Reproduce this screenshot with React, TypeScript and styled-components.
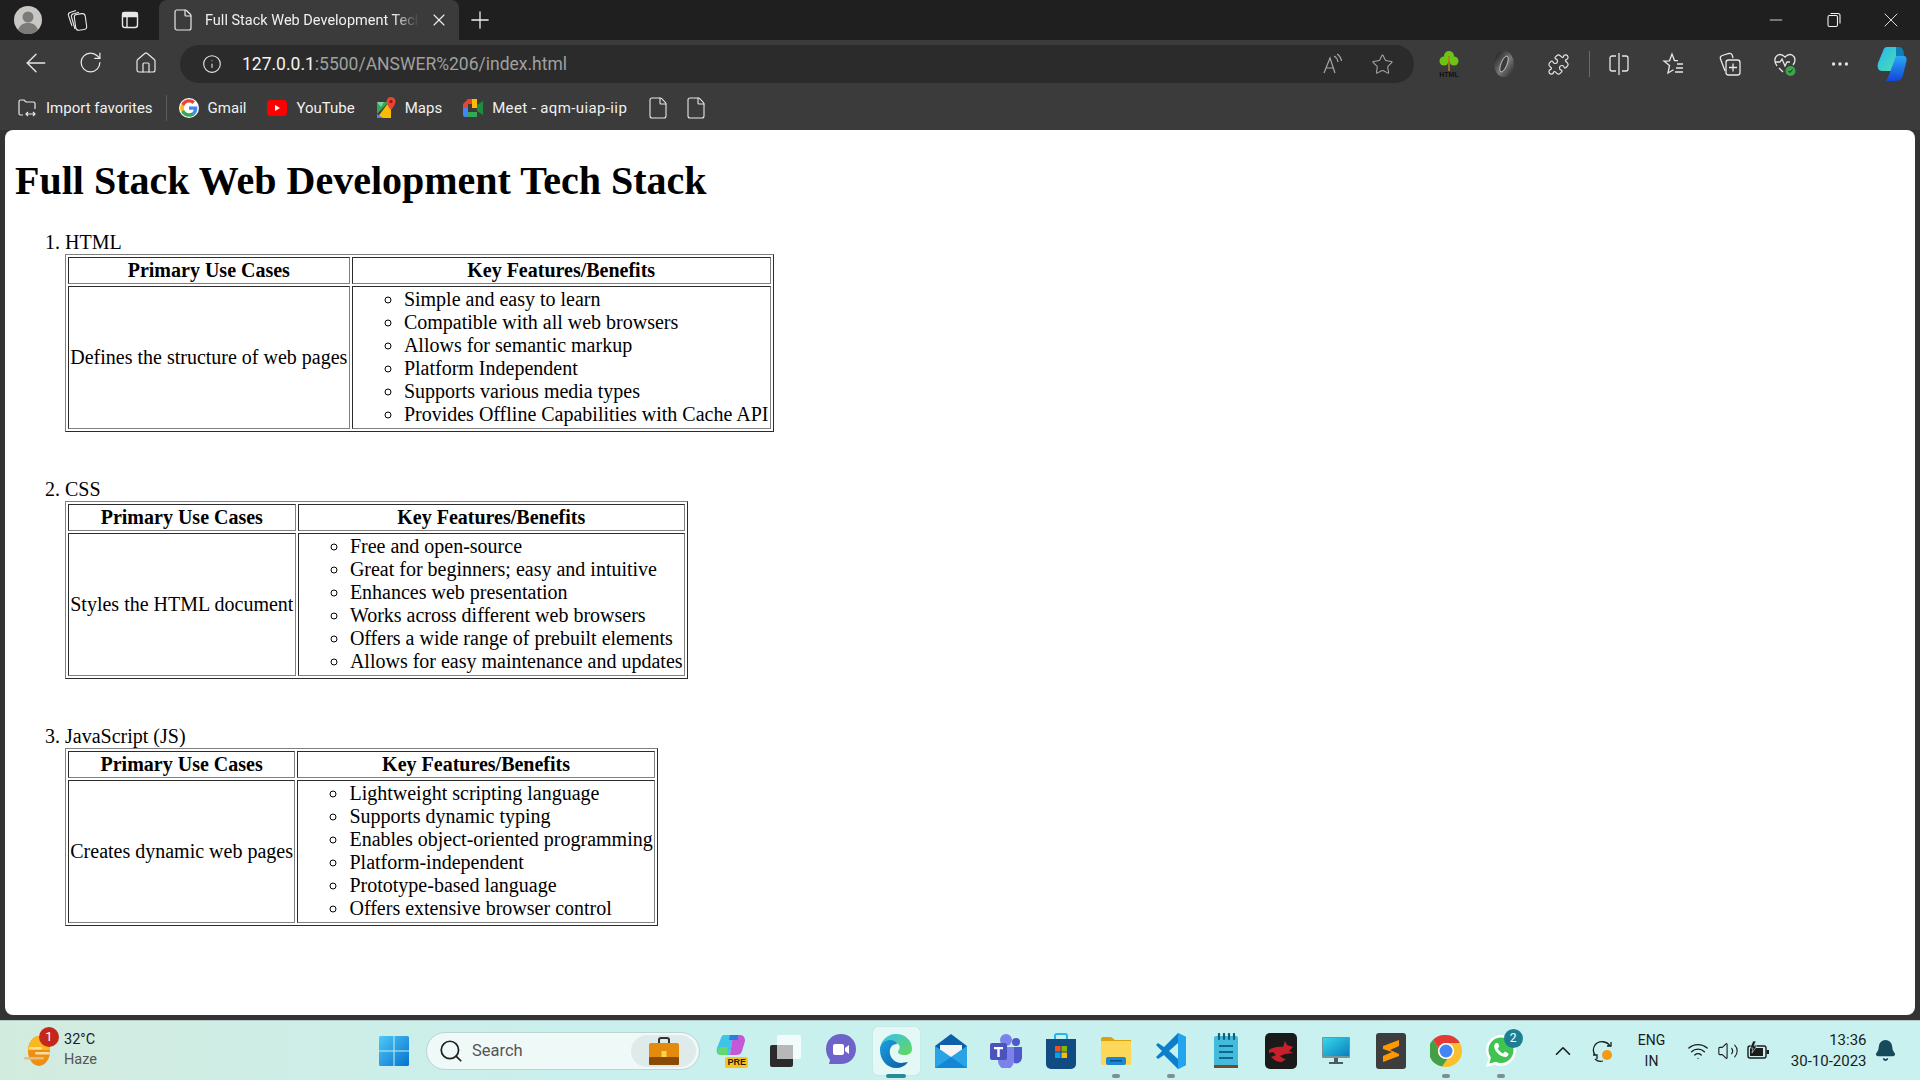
import React from 'react'
import styled, { createGlobalStyle } from 'styled-components'
import {
	ArrowLeft,
	RotateCw,
	Home,
	Info,
	Star,
	Puzzle,
	X,
	Minus,
	Plus,
	File,
	MoreHorizontal,
	Search,
	ChevronUp,
	Wifi,
	Volume2,
	Bell,
} from 'lucide-react'

const stacks = [
	{
		name: 'HTML',
		useCase: 'Defines the structure of web pages',
		features: [
			'Simple and easy to learn',
			'Compatible with all web browsers',
			'Allows for semantic markup',
			'Platform Independent',
			'Supports various media types',
			'Provides Offline Capabilities with Cache API',
		],
	},
	{
		name: 'CSS',
		useCase: 'Styles the HTML document',
		features: [
			'Free and open-source',
			'Great for beginners; easy and intuitive',
			'Enhances web presentation',
			'Works across different web browsers',
			'Offers a wide range of prebuilt elements',
			'Allows for easy maintenance and updates',
		],
	},
	{
		name: 'JavaScript (JS)',
		useCase: 'Creates dynamic web pages',
		features: [
			'Lightweight scripting language',
			'Supports dynamic typing',
			'Enables object-oriented programming',
			'Platform-independent',
			'Prototype-based language',
			'Offers extensive browser control',
		],
	},
]

export default function App() {
	return (
		<Screen>
			<GlobalStyle />
			<TabStrip>
				<Slot $w={40}>
					<AvatarIcon />
				</Slot>
				<Slot $w={48}>
					<WorkspacesIcon />
				</Slot>
				<Slot $w={48}>
					<VerticalTabsIcon />
				</Slot>
				<ActiveTab>
					<File size={24} strokeWidth={1.2} color="#e8e8e8" />
					<TabTitle>Full Stack Web Development Tech Stack</TabTitle>
					<X size={20} strokeWidth={1.3} color="#f0f0f0" />
				</ActiveTab>
				<Slot $w={42}>
					<Plus size={28} strokeWidth={1.1} color="#f0f0f0" />
				</Slot>
				<Grow />
				<Slot $w={57.5}>
					<Minus size={20} strokeWidth={1} color="#f0f0f0" />
				</Slot>
				<Slot $w={57.5}>
					<RestoreIcon />
				</Slot>
				<Slot $w={57.5}>
					<X size={24} strokeWidth={0.9} color="#f0f0f0" />
				</Slot>
			</TabStrip>

			<Toolbar>
				<Slot $w={55}>
					<ArrowLeft size={30} strokeWidth={1.1} color="#e8e8e8" />
				</Slot>
				<Slot $w={55}>
					<RotateCw size={25} strokeWidth={1.2} color="#e8e8e8" />
				</Slot>
				<Slot $w={55}>
					<Home size={24} strokeWidth={1.2} color="#e8e8e8" />
				</Slot>
				<AddressPill>
					<Info size={20} strokeWidth={1.3} color="#e8e8e8" />
					<UrlText>
						127.0.0.1<UrlRest>:5500/ANSWER%206/index.html</UrlRest>
					</UrlText>
					<Grow />
					<Slot $w={50}>
						<ReadAloudIcon />
					</Slot>
					<Slot $w={48}>
						<Star size={23} strokeWidth={1.1} color="#a6a6a6" />
					</Slot>
				</AddressPill>
				<ExtensionGroup>
					<Slot $w={55}>
						<TreeIcon />
					</Slot>
					<Slot $w={55}>
						<RingIcon />
					</Slot>
					<Slot $w={55}>
						<Puzzle size={23} strokeWidth={1.2} color="#e8e8e8" />
					</Slot>
					<ToolbarDivider />
					<Slot $w={55.5}>
						<SplitIcon />
					</Slot>
					<Slot $w={55.5}>
						<FavoritesIcon />
					</Slot>
					<Slot $w={55.5}>
						<CollectionsIcon />
					</Slot>
					<Slot $w={55.5}>
						<HealthIcon />
					</Slot>
					<Slot $w={53}>
						<MoreHorizontal size={22} strokeWidth={1.6} color="#e8e8e8" />
					</Slot>
					<Slot $w={52}>
						<CopilotIcon />
					</Slot>
				</ExtensionGroup>
			</Toolbar>

			<BookmarksBar>
				<Bookmark>
					<ImportIcon />
					<span>Import favorites</span>
				</Bookmark>
				<BookmarkDivider />
				<Bookmark>
					<GoogleIcon />
					<span>Gmail</span>
				</Bookmark>
				<Bookmark>
					<YoutubeIcon />
					<span>YouTube</span>
				</Bookmark>
				<Bookmark>
					<MapsIcon />
					<span>Maps</span>
				</Bookmark>
				<Bookmark>
					<MeetIcon />
					<MeetLabel>Meet - aqm-uiap-iip</MeetLabel>
				</Bookmark>
				<BookmarkFile>
					<File size={24} strokeWidth={1.1} color="#e8e8e8" />
				</BookmarkFile>
				<BookmarkFile>
					<File size={24} strokeWidth={1.1} color="#e8e8e8" />
				</BookmarkFile>
			</BookmarksBar>

			<Viewport>
				<Content>
					<ScaledDocument>
						<Heading>Full Stack Web Development Tech Stack</Heading>
						<StackList>
							{stacks.map((stack) => (
								<li key={stack.name}>
									{stack.name}
									<StackTable>
										<thead>
											<tr>
												<HeadCell>Primary Use Cases</HeadCell>
												<HeadCell>Key Features/Benefits</HeadCell>
											</tr>
										</thead>
										<tbody>
											<tr>
												<BodyCell>{stack.useCase}</BodyCell>
												<BodyCell>
													<FeatureList>
														{stack.features.map((feature) => (
															<li key={feature}>{feature}</li>
														))}
													</FeatureList>
												</BodyCell>
											</tr>
										</tbody>
									</StackTable>
									<br />
									<br />
								</li>
							))}
						</StackList>
					</ScaledDocument>
				</Content>
			</Viewport>

			<Taskbar>
				<Weather>
					<WeatherIconWrap>
						<HazeIcon />
						<WeatherBadge>1</WeatherBadge>
					</WeatherIconWrap>
					<WeatherText>
						<Temp>32°C</Temp>
						<Haze>Haze</Haze>
					</WeatherText>
				</Weather>
				<Slot $w={55}>
					<WindowsIcon />
				</Slot>
				<SearchBox>
					<Search size={26} strokeWidth={1.6} color="#1f1f1f" />
					<SearchLabel>Search</SearchLabel>
					<Grow />
					<SearchBadge>
						<BriefcaseIcon />
					</SearchBadge>
				</SearchBox>
				<TaskSlot>
					<CopilotPreIcon />
				</TaskSlot>
				<TaskSlot>
					<TaskViewIcon />
				</TaskSlot>
				<TaskSlot>
					<MeetChatIcon />
				</TaskSlot>
				<TaskSlot $active>
					<EdgeIcon />
					<RunningDot $active />
				</TaskSlot>
				<TaskSlot>
					<MailIcon />
				</TaskSlot>
				<TaskSlot>
					<TeamsIcon />
				</TaskSlot>
				<TaskSlot>
					<StoreIcon />
				</TaskSlot>
				<TaskSlot>
					<FolderIcon />
					<RunningDot />
				</TaskSlot>
				<TaskSlot>
					<VsCodeIcon />
					<RunningDot />
				</TaskSlot>
				<TaskSlot>
					<NotepadIcon />
				</TaskSlot>
				<TaskSlot>
					<MsiIcon />
				</TaskSlot>
				<TaskSlot>
					<MonitorIcon />
				</TaskSlot>
				<TaskSlot>
					<SublimeIcon />
				</TaskSlot>
				<TaskSlot>
					<ChromeIcon />
					<RunningDot />
				</TaskSlot>
				<TaskSlot>
					<WhatsappIcon />
					<AppBadge>2</AppBadge>
					<RunningDot />
				</TaskSlot>
				<Tray>
					<Slot $w={38}>
						<ChevronUp size={26} strokeWidth={1.5} color="#1c1c1c" />
					</Slot>
					<Slot $w={42}>
						<SyncIcon />
					</Slot>
					<Lang>
						<span>ENG</span>
						<span>IN</span>
					</Lang>
					<Slot $w={30}>
						<Wifi size={22} strokeWidth={1.4} color="#1c1c1c" />
					</Slot>
					<Slot $w={30}>
						<Volume2 size={22} strokeWidth={1.2} color="#1c1c1c" />
					</Slot>
					<Slot $w={30}>
						<BatteryIcon />
					</Slot>
					<Clock>
						<span>13:36</span>
						<span>30-10-2023</span>
					</Clock>
					<Slot $w={38}>
						<Bell size={23} fill="#164a5c" color="#164a5c" />
					</Slot>
				</Tray>
			</Taskbar>
		</Screen>
	)
}

/* small drawn icons */

const AvatarIcon = () => (
	<svg width="28" height="28" viewBox="0 0 28 28">
		<circle cx="14" cy="14" r="14" fill="#c9c7c4" />
		<circle cx="14" cy="11" r="5.5" fill="#7d7b79" />
		<path d="M4 24c2-6 6-7 10-7s8 1 10 7a14 14 0 0 1-20 0z" fill="#7d7b79" />
	</svg>
)

const WorkspacesIcon = () => (
	<svg width="24" height="24" viewBox="0 0 24 24" fill="none" stroke="#e8e8e8" strokeWidth="1.1">
		<rect x="10" y="6" width="11" height="16" rx="3" transform="rotate(-8 15 14)" />
		<path d="M10 21 6.500 9c-.4-1.500.2-2.500 1.500-3l6-1.800" />
		<path d="M7 18 3.500 7.500c-.4-1.500.2-2.500 1.500-3l6-2" />
	</svg>
)

const VerticalTabsIcon = () => (
	<svg width="20" height="20" viewBox="0 0 20 20" fill="none" stroke="#e8e8e8" strokeWidth="1.4">
		<rect x="2.5" y="2.5" width="15" height="15" rx="2.5" />
		<path d="M7 6.500v11" />
		<path d="M3 3h14v3.500H3z" fill="#e8e8e8" />
	</svg>
)

const RestoreIcon = () => (
	<svg width="16" height="16" viewBox="0 0 16 16" fill="none" stroke="#f0f0f0" strokeWidth="1.1">
		<rect x="2" y="3.5" width="9.5" height="11" rx="1.5" />
		<path d="M4.500 1.500h7.500a2 2 0 0 1 2 2v8" />
	</svg>
)

const ReadAloudIcon = () => (
	<svg width="22" height="22" viewBox="0 0 22 22" fill="none" stroke="#a6a6a6" strokeWidth="1.2">
		<path d="M2 20 8 5l5 15M4 15h8" />
		<path d="M12 3c2 1 3.500 3 4 6M15 1c2.500 1.500 4 4 4.500 7" />
	</svg>
)

const TreeIcon = () => (
	<svg width="24" height="28" viewBox="0 0 24 28">
		<circle cx="12" cy="6" r="5" fill="#6cc413" />
		<circle cx="7" cy="11" r="4.500" fill="#6cc413" />
		<circle cx="17" cy="11" r="4.500" fill="#6cc413" />
		<rect x="11.200" y="6" width="1.600" height="15" fill="#b7791f" />
		<text x="12" y="27" textAnchor="middle" fontSize="7" fontWeight="bold" fontFamily="'Liberation Sans', sans-serif" fill="#111">
			HTML
		</text>
	</svg>
)

const RingIcon = () => (
	<svg width="22" height="28" viewBox="0 0 22 28">
		<defs>
			<linearGradient id="ringGrad" x1="0" y1="0" x2="1" y2="1">
				<stop offset="0" stopColor="#111" />
				<stop offset="0.55" stopColor="#777" />
				<stop offset="1" stopColor="#222" />
			</linearGradient>
		</defs>
		<ellipse cx="11" cy="14" rx="10" ry="13" fill="url(#ringGrad)" />
		<ellipse cx="11" cy="14" rx="3" ry="8.500" fill="#3b3b3b" stroke="#ccc" strokeWidth="0.800" transform="rotate(22 11 14)" />
	</svg>
)

const SplitIcon = () => (
	<svg width="22" height="24" viewBox="0 0 22 24" fill="none" stroke="#e8e8e8" strokeWidth="1.3">
		<path d="M8 4H4a2 2 0 0 0-2 2v11a2 2 0 0 0 2 2h4M14 4h4a2 2 0 0 1 2 2v11a2 2 0 0 1-2 2h-4M11 1v22" />
	</svg>
)

const FavoritesIcon = () => (
	<svg width="24" height="24" viewBox="0 0 24 24" fill="none" stroke="#e8e8e8" strokeWidth="1.3">
		<path d="M16 8.700 12.500 8.500 10 2 7.500 8.800 2 9l5.500 4.500L6 21l5.500-3.300" />
		<path d="M15 12h6M14 16h7M13 20h8" />
	</svg>
)

const CollectionsIcon = () => (
	<svg width="24" height="26" viewBox="0 0 24 26" fill="none" stroke="#e8e8e8" strokeWidth="1.3">
		<path d="M7 20 2.500 8c-.5-1.500.2-3 1.700-3.500L11 2.500c1.500-.4 2.600.2 3.200 1.500L15 7" />
		<rect x="8" y="9" width="14" height="15" rx="2.500" />
		<path d="M15 12.500v8M11 16.500h8" />
	</svg>
)

const HealthIcon = () => (
	<svg width="24" height="26" viewBox="0 0 24 26" fill="none">
		<path
			d="M4 15C1 11 1 6 5 4c3-1.500 5 0 7 2 2-2 4-3.500 7-2 4 2 3.500 7 1 10M1.500 11H7l2-3 3 7 2-4h3M6 17l4 4"
			stroke="#e8e8e8"
			strokeWidth="1.3"
		/>
		<circle cx="17.500" cy="20" r="5" fill="#3fa34d" />
		<path d="M15.500 20l1.500 1.500 2.500-3" stroke="#123" strokeWidth="1" />
	</svg>
)

const CopilotIcon = () => (
	<svg width="30" height="36" viewBox="0 0 30 36">
		<defs>
			<linearGradient id="copA" x1="0" y1="0" x2="1" y2="1">
				<stop offset="0" stopColor="#27b7f0" />
				<stop offset="1" stopColor="#4fe0b0" />
			</linearGradient>
			<linearGradient id="copB" x1="0" y1="0" x2="0" y2="1">
				<stop offset="0" stopColor="#27a8f5" />
				<stop offset="1" stopColor="#1546d8" />
			</linearGradient>
		</defs>
		<path d="M10 1h12l-1 6-7 18H5C1 25 0 21 1 17L6 5c1-3 2-4 4-4z" fill="url(#copA)" />
		<path d="M16 35H9l3-6 7-19h8c2 0 3 2 2.500 5L26 29c-1 4-3 6-10 6z" fill="url(#copB)" />
		<path d="M19 1h3c3 0 5 3 5 9h-8z" fill="#0d7fb5" />
	</svg>
)

const ImportIcon = () => (
	<svg width="20" height="20" viewBox="0 0 20 20" fill="none" stroke="#e8e8e8" strokeWidth="1.2">
		<path d="M6 17H3.500A1.500 1.500 0 0 1 2 15.500V3.500A1.500 1.500 0 0 1 3.500 2H7l2 2h7.500A1.500 1.500 0 0 1 18 5.500V11" />
		<path d="M9 16h9M11 14l-2 2 2 2M16 14l2 2-2 2" />
	</svg>
)

const GoogleIcon = () => (
	<svg width="20" height="20" viewBox="0 0 48 48">
		<circle cx="24" cy="24" r="24" fill="#fff" />
		<path fill="#EA4335" d="M24 11c3.300 0 6 1.200 8.200 3.100l6-6C34.500 4.700 29.600 3 24 3 15.800 3 8.800 7.700 5.300 14.500l7 5.400C14 14.700 18.500 11 24 11z" />
		<path fill="#4285F4" d="M44 24.500c0-1.500-.1-2.900-.4-4.300H24v8.100h11.300c-.5 2.600-2 4.900-4.300 6.400l6.700 5.200C41.600 36.300 44 30.900 44 24.500z" />
		<path fill="#FBBC05" d="M12.300 28.100c-.4-1.300-.7-2.700-.7-4.100s.3-2.800.7-4.100l-7-5.400C3.900 17.400 3 20.600 3 24s.9 6.600 2.300 9.500l7-5.400z" />
		<path fill="#34A853" d="M24 45c5.600 0 10.400-1.900 13.700-5.100L31 34.700c-1.800 1.200-4.200 2-7 2-5.500 0-10-3.700-11.700-8.600l-7 5.400C8.800 40.300 15.800 45 24 45z" />
	</svg>
)

const YoutubeIcon = () => (
	<svg width="20" height="16" viewBox="0 0 20 16">
		<rect width="20" height="16" rx="4" fill="#f00" />
		<path d="M8 5l5 3-5 3z" fill="#fff" />
	</svg>
)

const MapsIcon = () => (
	<svg width="20" height="22" viewBox="0 0 20 22">
		<path d="M1 5h12L1 17z" fill="#34a853" />
		<path d="M1 21 13 5h2v16z" fill="#fbbc05" />
		<path d="M1 17v4h6z" fill="#4285f4" />
		<path d="M5 10 1 5h7z" fill="#7dd3a8" />
		<path d="M15 0a4.500 4.500 0 0 0-4.500 4.500C10.500 8 15 13 15 13s4.500-5 4.500-8.500A4.500 4.500 0 0 0 15 0z" fill="#ea4335" />
		<circle cx="15" cy="4.500" r="1.600" fill="#8c1c13" />
	</svg>
)

const MeetIcon = () => (
	<svg width="20" height="18" viewBox="0 0 20 18">
		<path d="M5 0h9v5H5v4H0V5z" fill="#ea4335" />
		<path d="M0 9h5v9H2a2 2 0 0 1-2-2z" fill="#4285f4" />
		<path d="M5 13h9v5H5z" fill="#34a853" />
		<rect x="9" y="0" width="5" height="9" fill="#fbbc05" />
		<path d="M14 6l6-4v14l-6-4z" fill="#1e8e3e" />
	</svg>
)

const HazeIcon = () => (
	<svg width="28" height="30" viewBox="0 0 28 30">
		<ellipse cx="15" cy="15" rx="11" ry="15" fill="#ef8f10" />
		<path d="M15 0c6 0 11 7 11 14H4C4 7 9 0 15 0z" fill="#f9b81f" />
		<rect x="5" y="11" width="13" height="2.500" rx="1.200" fill="#f8dca0" />
		<rect x="11" y="16" width="15" height="2.500" rx="1.200" fill="#f8dca0" />
		<rect x="0" y="21" width="20" height="2.500" rx="1.200" fill="#dcc08a" />
	</svg>
)

const WindowsIcon = () => (
	<svg width="30" height="30" viewBox="0 0 30 30">
		<defs>
			<linearGradient id="winGrad" x1="0" y1="0" x2="1" y2="1">
				<stop offset="0" stopColor="#4fc8f8" />
				<stop offset="1" stopColor="#0572cf" />
			</linearGradient>
		</defs>
		<path d="M0 1.500A1.500 1.500 0 0 1 1.500 0h13v14.500H0zM15.500 0h13A1.500 1.500 0 0 1 30 1.500v13H15.500zM0 15.500h14.500V30h-13A1.500 1.500 0 0 1 0 28.500zM15.500 15.500H30v13a1.500 1.500 0 0 1-1.500 1.500h-13z" fill="url(#winGrad)" />
	</svg>
)

const BriefcaseIcon = () => (
	<svg width="30" height="28" viewBox="0 0 30 28">
		<path d="M10 7V3a2 2 0 0 1 2-2h6a2 2 0 0 1 2 2v4" fill="none" stroke="#333" strokeWidth="2" />
		<rect y="6" width="30" height="22" rx="2" fill="#e48a0c" />
		<rect y="20" width="30" height="8" rx="1" fill="#8a4a08" />
		<rect x="12.500" y="14" width="5" height="6" fill="#f8d84a" />
	</svg>
)

const CopilotPreIcon = () => (
	<PreWrap>
		<svg width="30" height="26" viewBox="0 0 30 26">
			<path d="M8 1h9l-3 20H5C1 21 0 18 1 14L5 4c.7-2 1.500-3 3-3z" fill="#3fc4e8" />
			<path d="M14 21l3-20h7c3 0 5 2 5 6l-3 10c-1 3-3 4-6 4z" fill="#c458d6" />
			<path d="M14 1h8v5h-9z" fill="#2b7de0" />
			<path d="M4 13h8l-1 8H5c-3 0-4-3-3-6z" fill="#63d86e" />
		</svg>
		<PreTag>PRE</PreTag>
	</PreWrap>
)

const TaskViewIcon = () => (
	<svg width="32" height="32" viewBox="0 0 32 32">
		<rect x="0" y="10" width="23" height="22" rx="2" fill="#2b2b2b" />
		<rect x="7" y="0" width="24" height="24" rx="2" fill="#fff" fillOpacity="0.75" />
		<rect x="7" y="10" width="16" height="14" fill="#b8b8b8" />
	</svg>
)

const MeetChatIcon = () => (
	<svg width="30" height="34" viewBox="0 0 30 34">
		<path d="M15 0c8 0 15 6 15 15s-7 15-15 15H3l1-4C1.500 23 0 19 0 15 0 6 7 0 15 0z" fill="#6e63c9" />
		<rect x="7" y="10" width="11" height="11" rx="2" fill="#fff" />
		<path d="M19 14l4-3v9l-4-3z" fill="#fff" />
	</svg>
)

const EdgeIcon = () => (
	<svg width="32" height="36" viewBox="0 0 32 36">
		<defs>
			<linearGradient id="edgeBlue" x1="0" y1="0" x2="1" y2="1">
				<stop offset="0" stopColor="#1ba0e0" />
				<stop offset="1" stopColor="#0c59a4" />
			</linearGradient>
			<linearGradient id="edgeGreen" x1="0" y1="0" x2="1" y2="1">
				<stop offset="0" stopColor="#35c1f1" />
				<stop offset="1" stopColor="#66d856" />
			</linearGradient>
		</defs>
		<path d="M16 1c9 0 16 6 16 15 0 4-3 6-8 6-3 0-6-1-6-3s3-3 1-7c-2-3-7-4-11-2C3 12 0 16 0 17 0 8 7 1 16 1z" fill="url(#edgeGreen)" />
		<path d="M0 17c0-6 5-10 10-10 3 0 7 2 7 4-5 0-8 4-7 10 1 5 6 9 11 9l7-1c-3 4-7 6-12 6C7 35 0 27 0 17z" fill="url(#edgeBlue)" />
	</svg>
)

const MailIcon = () => (
	<svg width="32" height="34" viewBox="0 0 32 34">
		<path d="M0 12 16 0l16 12v6H0z" fill="#0f5fa8" />
		<path d="M5 11h22v5l-11 7-11-7z" fill="#f4f4f4" />
		<path d="M0 12l16 11 16-11v22H0z" fill="#2aa3e6" />
		<path d="M0 34l16-11 16 11z" fill="#1287d6" />
	</svg>
)

const TeamsIcon = () => (
	<svg width="32" height="34" viewBox="0 0 32 34">
		<circle cx="16" cy="6" r="6" fill="#7b83eb" />
		<circle cx="26" cy="8" r="4" fill="#5059c9" />
		<path d="M20 13h12v11a6 6 0 0 1-8 5z" fill="#5059c9" />
		<path d="M8 13h16v14a7 7 0 0 1-16 0z" fill="#7b83eb" />
		<rect y="9" width="17" height="17" rx="2" fill="#4b53bc" />
		<path d="M4 13h9v2.200H9.700V23H7.300v-7.800H4z" fill="#fff" />
	</svg>
)

const StoreIcon = () => (
	<svg width="30" height="36" viewBox="0 0 30 36">
		<path d="M9 7V3a2 2 0 0 1 2-2h8a2 2 0 0 1 2 2v4" fill="none" stroke="#26b5f0" strokeWidth="2" />
		<path d="M0 6h30v25a5 5 0 0 1-5 5H5a5 5 0 0 1-5-5z" fill="#124a82" />
		<rect x="9" y="13" width="5.500" height="5.500" fill="#f25022" />
		<rect x="15.500" y="13" width="5.500" height="5.500" fill="#7fba00" />
		<rect x="9" y="19.500" width="5.500" height="5.500" fill="#00a4ef" />
		<rect x="15.500" y="19.500" width="5.500" height="5.500" fill="#ffb900" />
	</svg>
)

const FolderIcon = () => (
	<svg width="30" height="28" viewBox="0 0 30 28">
		<path d="M0 2a2 2 0 0 1 2-2h8l4 3h16v6H0z" fill="#d9a20e" />
		<rect y="4" width="30" height="24" rx="1" fill="#fbd85a" />
		<rect x="5" y="20" width="20" height="8" rx="2" fill="#1a87d6" />
		<rect x="9" y="23" width="12" height="1.500" fill="#0b4f88" />
	</svg>
)

const VsCodeIcon = () => (
	<svg width="30" height="36" viewBox="0 0 30 36">
		<path d="M22 0l8 4v28l-8 4-14-14-6 4-2-2 6-6-6-6 2-2 6 4z" fill="#0b7fc9" />
		<path d="M22 0l8 4v28l-8 4z" fill="#22a5ee" />
		<path d="M22 10v16l-9-8z" fill="#c8f0ef" />
	</svg>
)

const NotepadIcon = () => (
	<svg width="24" height="36" viewBox="0 0 24 36">
		<rect y="3" width="24" height="31" rx="2" fill="#43bbdc" />
		<rect y="32" width="24" height="3" fill="#7a4a20" />
		<path d="M5 1v5M10 1v5M15 1v5M20 1v5" stroke="#0f5f82" strokeWidth="2.200" strokeLinecap="round" />
		<path d="M5 13h14M5 19h14M5 25h14" stroke="#11668c" strokeWidth="2" />
	</svg>
)

const MsiIcon = () => (
	<svg width="32" height="36" viewBox="0 0 32 36">
		<rect width="32" height="36" rx="5" fill="#1a1a1a" />
		<path d="M4 17c4-3 9-4 14-3l2-6 2 4 6 2-4 4 4 2-8 1-5 2c2 2 4 3 6 3l-4 3c-5 0-8-2-11-5l5-2-3-3-4 1z" fill="#c8202a" />
	</svg>
)

const MonitorIcon = () => (
	<svg width="28" height="28" viewBox="0 0 28 28">
		<defs>
			<linearGradient id="monGrad" x1="0" y1="0" x2="1" y2="1">
				<stop offset="0" stopColor="#35d8ec" />
				<stop offset="1" stopColor="#0a7fbe" />
			</linearGradient>
		</defs>
		<rect width="28" height="21" rx="1" fill="#7a9298" />
		<rect x="1" y="1" width="26" height="18" fill="url(#monGrad)" />
		<rect x="12" y="21" width="4" height="4" fill="#4d5a5e" />
		<rect x="7" y="25" width="14" height="2" fill="#4d5a5e" />
	</svg>
)

const SublimeIcon = () => (
	<svg width="30" height="36" viewBox="0 0 30 36">
		<rect width="30" height="36" rx="3" fill="#3d3d3d" />
		<path d="M7 13 23 7v6l-9 4 9 4v2L7 29v-6l9-4-9-3z" fill="#ff9800" />
	</svg>
)

const ChromeIcon = () => (
	<svg width="32" height="34" viewBox="0 0 32 32">
		<circle cx="16" cy="16" r="16" fill="#fbc02d" />
		<path d="M16 0a16 16 0 0 1 13.900 8H16a8 8 0 0 0-7.500 5L3 4.800A16 16 0 0 1 16 0z" fill="#e53935" />
		<path d="M3 4.800 8.500 13a8 8 0 0 0 9 10.800L12 31.500A16 16 0 0 1 3 4.800z" fill="#43a047" />
		<circle cx="16" cy="16" r="8" fill="#fff" />
		<circle cx="16" cy="16" r="6.500" fill="#4285f4" />
	</svg>
)

const WhatsappIcon = () => (
	<svg width="32" height="34" viewBox="0 0 32 34">
		<path d="M16 1C8 1 1 8 1 16c0 3 1 6 2.500 8L1 33l9-2.500c2 1 4 1.500 6 1.500 8 0 15-7 15-16S24 1 16 1z" fill="#fff" />
		<path d="M16 3.500C9 3.500 3.500 9 3.500 16c0 2.800.9 5.300 2.400 7.400L4.500 29.500l6.300-1.700c1.600.8 3.300 1.200 5.200 1.200 7 0 12.500-6 12.500-13S23 3.500 16 3.500z" fill="#3fc351" />
		<path d="M11 9c-1 .5-2 2-1.800 4 .5 4 5.500 9.500 10.500 10 2 .2 3.300-1 3.800-2.300l-.2-1.500-3.500-1.700-1.700 2c-2-.8-4.300-3-5.300-5.300l1.500-1.700L13 9z" fill="#fff" />
	</svg>
)

const SyncIcon = () => (
	<svg width="24" height="24" viewBox="0 0 24 24" fill="none">
		<path d="M19 7C16 2 8 1 4 6c-2 3-2 7 0 10M4 20c2 2 5 3 8 2M16 7h4V3M2 16h4v4" stroke="#1c1c1c" strokeWidth="1.300" />
		<circle cx="16" cy="16" r="5" fill="#f49a12" />
	</svg>
)

const BatteryIcon = () => (
	<svg width="24" height="20" viewBox="0 0 24 20" fill="none">
		<rect x="2" y="5" width="18" height="12" rx="2" stroke="#1c1c1c" strokeWidth="1.400" />
		<rect x="4" y="7" width="13" height="8" fill="#1c1c1c" />
		<rect x="20.500" y="9" width="2.500" height="4" fill="#1c1c1c" />
		<path d="M7 0 4 7h3l-1 5 5-7H8l2-5z" fill="#1c1c1c" stroke="#c8f0ef" strokeWidth="0.600" />
	</svg>
)

/* styles */

const GlobalStyle = createGlobalStyle`
	html, body {
		margin: 0;
		padding: 0;
	}
	body {
		background: #3b3b3b;
	}
`

const Screen = styled.div`
	width: 1920px;
	height: 1080px;
	display: flex;
	flex-direction: column;
	overflow: hidden;
	font-family: 'Open Sans', 'Noto Sans', sans-serif;
`

const Grow = styled.div`
	flex: 1;
`

const Slot = styled.div<{ $w: number }>`
	width: ${(p) => p.$w}px;
	flex-shrink: 0;
	display: flex;
	align-items: center;
	justify-content: center;
`

const TabStrip = styled.div`
	height: 40px;
	flex-shrink: 0;
	background: #1f1f1f;
	display: flex;
	align-items: center;
	gap: 5px;
	padding-left: 8px;

	& > ${Slot}:last-child,
	& > ${Slot}:nth-last-child(2),
	& > ${Slot}:nth-last-child(3) {
		margin-left: -5px;
	}
`

const ActiveTab = styled.div`
	width: 300px;
	height: 40px;
	margin-right: -5px;
	padding: 0 10px 0 12px;
	box-sizing: border-box;
	background: #3b3b3b;
	border-radius: 8px 8px 0 0;
	display: flex;
	align-items: center;
	gap: 10px;
	color: #f0f0f0;
`

const TabTitle = styled.div`
	flex: 1;
	font-family: Roboto, sans-serif;
	font-size: 14.5px;
	white-space: nowrap;
	overflow: hidden;
	-webkit-mask-image: linear-gradient(90deg, #000 88%, transparent);
	mask-image: linear-gradient(90deg, #000 88%, transparent);
`

const Toolbar = styled.div`
	height: 45px;
	flex-shrink: 0;
	background: #3b3b3b;
	display: flex;
	align-items: center;
	padding-left: 8px;
`

const AddressPill = styled.div`
	width: 1234px;
	height: 38px;
	margin-left: 7px;
	margin-top: 3px;
	padding: 0 8px 0 22px;
	box-sizing: border-box;
	flex-shrink: 0;
	background: #2b2b2b;
	border-radius: 19px;
	display: flex;
	align-items: center;
	gap: 20px;

	& > ${Slot} {
		margin-left: -20px;
	}
`

const UrlText = styled.div`
	font-family: Roboto, sans-serif;
	font-size: 17.5px;
	color: #f4f4f4;
	white-space: nowrap;
`

const UrlRest = styled.span`
	color: #a0a0a0;
`

const ExtensionGroup = styled.div`
	display: flex;
	align-items: center;
	margin-left: 7px;
	margin-top: 3px;
`

const ToolbarDivider = styled.div`
	width: 1px;
	height: 26px;
	margin: 0 1px 0 3px;
	background: #6a6a6a;
`

const BookmarksBar = styled.div`
	height: 45px;
	flex-shrink: 0;
	background: #3b3b3b;
	display: flex;
	align-items: center;
	padding-left: 17px;
	box-sizing: border-box;
`

const Bookmark = styled.div`
	display: flex;
	align-items: center;
	gap: 9px;
	margin-right: 21px;
	font-family: Roboto, sans-serif;
	font-size: 15px;
	color: #f0f0f0;
	white-space: nowrap;
`

const MeetLabel = styled.span`
	letter-spacing: 0.38px;
`

const BookmarkDivider = styled.div`
	width: 1px;
	height: 26px;
	margin: 0 12px 0 -8px;
	background: #5c5c5c;
`

const BookmarkFile = styled.div`
	display: flex;
	margin-right: 16px;
	margin-left: -2px;
`

const Viewport = styled.div`
	flex: 1;
	background: #333;
	padding: 0 5px 5px;
	min-height: 0;
	display: flex;
`

const Content = styled.div`
	flex: 1;
	background: #fff;
	border-radius: 8px;
	overflow: hidden;
`

const ScaledDocument = styled.div`
	zoom: 1.25;
	padding: 0 8px;
	font-family: 'Liberation Serif', 'Times New Roman', serif;
	font-size: 16px;
	color: #000;
`

const Heading = styled.h1`
	font-size: 2em;
	font-weight: bold;
	margin: 0.67em 0;
`

const StackList = styled.ol`
	margin: 1em 0;
	padding-left: 40px;
`

const StackTable = styled.table`
	border: 1px outset #808080;
	border-spacing: 2px;
	border-collapse: separate;
`

const HeadCell = styled.th`
	border: 1px inset #808080;
	padding: 1px;
	font-weight: bold;
	text-align: center;
`

const BodyCell = styled.td`
	border: 1px inset #808080;
	padding: 1px;
`

const FeatureList = styled.ul`
	margin: 0;
	padding-left: 40px;
	list-style-type: circle;
`

const Taskbar = styled.div`
	height: 60px;
	flex-shrink: 0;
	box-sizing: border-box;
	border-top: 1px solid #b4c8c8;
	background: linear-gradient(90deg, #d3ebdf 0%, #c9f0ed 30%, #c8f1f0 100%);
	display: flex;
	align-items: center;
	color: #1c1c1c;
`

const Weather = styled.div`
	width: 366.5px;
	flex-shrink: 0;
	padding-left: 24px;
	box-sizing: border-box;
	display: flex;
	align-items: center;
	gap: 12px;
`

const WeatherIconWrap = styled.div`
	position: relative;
	display: flex;
`

const WeatherBadge = styled.div`
	position: absolute;
	top: -9px;
	right: -7px;
	width: 20px;
	height: 20px;
	border-radius: 50%;
	background: #c4281c;
	color: #fff;
	font-family: Roboto, sans-serif;
	font-size: 13px;
	line-height: 20px;
	text-align: center;
`

const WeatherText = styled.div`
	display: flex;
	flex-direction: column;
	font-family: Roboto, sans-serif;
	font-size: 14.5px;
	line-height: 20px;
	margin-top: -1px;
`

const Temp = styled.span`
	color: #1c1c1c;
`

const Haze = styled.span`
	color: #555;
`

const SearchBox = styled.div`
	width: 274px;
	height: 38px;
	margin-left: 4.5px;
	margin-right: 3.5px;
	padding: 0 3px 0 11px;
	box-sizing: border-box;
	flex-shrink: 0;
	border-radius: 19px;
	background: #eef9f8;
	border: 1px solid #bcd4d4;
	display: flex;
	align-items: center;
	gap: 8px;
	font-family: Roboto, sans-serif;
`

const SearchLabel = styled.span`
	font-size: 16.5px;
	color: #555;
`

const SearchBadge = styled.div`
	width: 65px;
	height: 32px;
	border-radius: 16px;
	background: #dfeaea;
	display: flex;
	align-items: center;
	justify-content: center;
`

const TaskSlot = styled.div<{ $active?: boolean }>`
	position: relative;
	width: 55px;
	height: 60px;
	flex-shrink: 0;
	display: flex;
	align-items: center;
	justify-content: center;

	&::before {
		content: '';
		display: ${(p) => (p.$active ? 'block' : 'none')};
		position: absolute;
		left: 4px;
		top: 6px;
		width: 47px;
		height: 48px;
		border-radius: 5px;
		background: rgba(255, 255, 255, 0.5);
		box-shadow: 0 0 1px rgba(0, 0, 0, 0.2);
	}

	& > svg {
		position: relative;
	}
`

const RunningDot = styled.div<{ $active?: boolean }>`
	position: absolute;
	bottom: 3px;
	left: 50%;
	transform: translateX(-50%);
	width: ${(p) => (p.$active ? '20px' : '8px')};
	height: 4px;
	border-radius: 2px;
	background: ${(p) => (p.$active ? '#2a8a9a' : '#7f8f90')};
`

const AppBadge = styled.div`
	position: absolute;
	top: 8px;
	right: 6px;
	width: 19px;
	height: 19px;
	border-radius: 50%;
	background: #1f7f92;
	color: #fff;
	font-family: Roboto, sans-serif;
	font-size: 12px;
	line-height: 19px;
	text-align: center;
`

const PreWrap = styled.div`
	position: relative;
	display: flex;
	margin-top: -7px;
`

const PreTag = styled.div`
	position: absolute;
	right: -2px;
	bottom: -8px;
	padding: 0 2px;
	border-radius: 2px;
	background: #fcc419;
	color: #1c1c1c;
	font-family: 'Liberation Sans', sans-serif;
	font-size: 9px;
	font-weight: bold;
	line-height: 11px;
`

const Tray = styled.div`
	display: flex;
	align-items: center;
	margin-left: 15px;
`

const Lang = styled.div`
	width: 56px;
	display: flex;
	flex-direction: column;
	align-items: center;
	font-family: Roboto, sans-serif;
	font-size: 14px;
	line-height: 21px;
	margin-right: 3px;
`

const Clock = styled.div`
	width: 94px;
	display: flex;
	flex-direction: column;
	align-items: flex-end;
	font-family: Roboto, sans-serif;
	font-size: 15px;
	line-height: 21px;
`
